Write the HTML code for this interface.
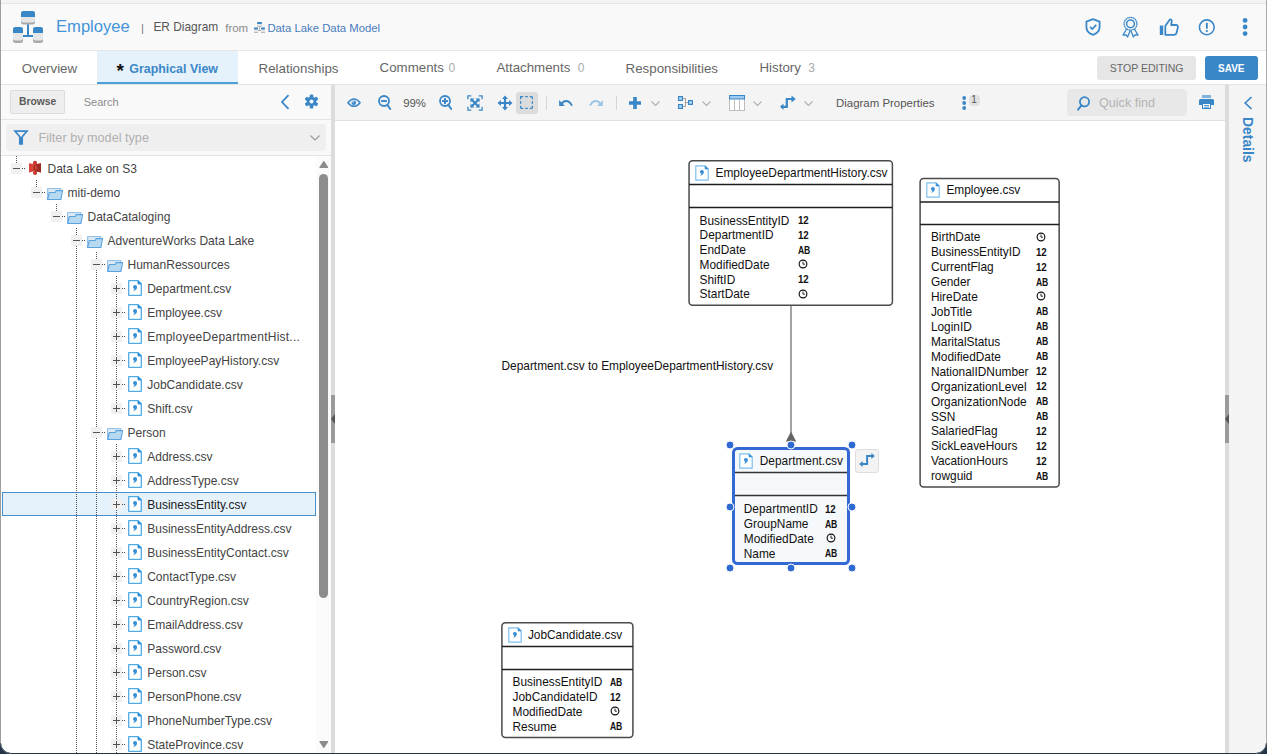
<!DOCTYPE html><html><head><meta charset="utf-8"><style>
html,body{margin:0;padding:0;}
body{width:1267px;height:754px;overflow:hidden;position:relative;background:#fff;font-family:"Liberation Sans",sans-serif;}
.t{position:absolute;white-space:nowrap;}
.b{position:absolute;box-sizing:border-box;}
.s{position:absolute;overflow:visible;}
</style></head><body>
<div class="b" style="left:0px;top:0px;width:1267px;height:3px;background:#f4f4f4"></div>
<div class="b" style="left:0px;top:3px;width:1267px;height:1px;background:#e6e6e6"></div>
<div class="b" style="left:0px;top:4px;width:1267px;height:46px;background:#f9f9f9"></div>
<div class="b" style="left:0px;top:50px;width:1267px;height:1px;background:#e6e6e6"></div>
<div class="b" style="left:0px;top:51px;width:1267px;height:33px;background:#fff"></div>
<div class="b" style="left:0px;top:84px;width:1267px;height:1px;background:#e4e4e4"></div>
<div class="b" style="left:97px;top:51px;width:141px;height:31px;background:#e6f2fb"></div>
<div class="b" style="left:97px;top:82px;width:141px;height:2px;background:#4ba0da"></div>
<svg class="s" style="left:12px;top:10px;" width="32" height="34" viewBox="0 0 32 34"><rect x="9" y="1" width="14" height="13.4" rx="2.5" fill="#a9a9a9"/><rect x="9" y="1" width="14" height="11.4" rx="2.5" fill="#e6e6e6"/><path d="M11.5 1h9a2.5 2.5 0 0 1 2.5 2.5V7H9V3.5A2.5 2.5 0 0 1 11.5 1z" fill="#3a87c8"/><rect x="1" y="17" width="10" height="16" rx="2.5" fill="#a9a9a9"/><rect x="1" y="17" width="10" height="13.5" rx="2.5" fill="#e6e6e6"/><path d="M3.5 17h5a2.5 2.5 0 0 1 2.5 2.5V23H1V19.5A2.5 2.5 0 0 1 3.5 17z" fill="#3a87c8"/><rect x="21" y="17" width="10" height="16" rx="2.5" fill="#a9a9a9"/><rect x="21" y="17" width="10" height="13.5" rx="2.5" fill="#e6e6e6"/><path d="M23.5 17h5a2.5 2.5 0 0 1 2.5 2.5V23H21V19.5A2.5 2.5 0 0 1 23.5 17z" fill="#3a87c8"/><rect x="15" y="14.4" width="2" height="11" fill="#3a87c8"/><rect x="11" y="25" width="10" height="2" fill="#3a87c8"/></svg>
<div class="t" style="left:56.00px;top:18.75px;font-size:16.6px;line-height:16.6px;color:#4494d8;font-weight:normal;">Employee</div>
<div class="t" style="left:141.00px;top:22.57px;font-size:11.5px;line-height:11.5px;color:#777;font-weight:normal;">|</div>
<div class="t" style="left:153.40px;top:22.03px;font-size:11.9px;line-height:11.9px;color:#555;font-weight:normal;">ER Diagram</div>
<div class="t" style="left:225.20px;top:23.17px;font-size:11.5px;line-height:11.5px;color:#8a8a8a;font-weight:normal;">from</div>
<svg class="s" style="left:254px;top:22px;" width="11" height="11" viewBox="0 0 11 11"><rect x="3" y="0" width="5" height="4.6" rx="0.8" fill="#e4e4e4"/><rect x="3" y="4" width="5" height="0.7" fill="#aaa"/><rect x="3" y="0" width="5" height="2" rx="0.8" fill="#3a87c8"/><rect x="0" y="5.4" width="4" height="5.4" rx="0.8" fill="#e4e4e4"/><rect x="0" y="10.1" width="4" height="0.8" fill="#aaa"/><rect x="0" y="5.4" width="4" height="2.2" rx="0.8" fill="#3a87c8"/><rect x="7" y="5.4" width="4" height="5.4" rx="0.8" fill="#e4e4e4"/><rect x="7" y="10.1" width="4" height="0.8" fill="#aaa"/><rect x="7" y="5.4" width="4" height="2.2" rx="0.8" fill="#3a87c8"/><rect x="5.1" y="4.7" width="0.8" height="3.5" fill="#aaa"/><rect x="4" y="8" width="3" height="0.8" fill="#999"/></svg>
<div class="t" style="left:267.40px;top:22.51px;font-size:11.33px;line-height:11.33px;color:#4a7cbc;font-weight:normal;">Data Lake Data Model</div>
<svg class="s" style="left:1085px;top:18px;" width="16" height="18" viewBox="0 0 16 18"><path d="M8 1.2 L14.6 3.6 V9 C14.6 13 11.8 15.6 8 16.8 C4.2 15.6 1.4 13 1.4 9 V3.6 Z" fill="none" stroke="#3a87c8" stroke-width="1.8" stroke-linejoin="round"/><path d="M5 8.8 L7.3 11 L11.2 6.8" fill="none" stroke="#3a87c8" stroke-width="1.7"/></svg>
<svg class="s" style="left:1122px;top:17px;" width="17" height="20" viewBox="0 0 17 20"><circle cx="8.5" cy="6.8" r="6.4" fill="none" stroke="#3a87c8" stroke-width="1.3" stroke-dasharray="1.6 0.4"/><circle cx="8.5" cy="6.8" r="3.9" fill="none" stroke="#3a87c8" stroke-width="1.5"/><path d="M4.6 12 L1 18.2 L4.2 17.8 L5.6 20 L8.2 13.6" fill="none" stroke="#3a87c8" stroke-width="1.3" stroke-linejoin="round"/><path d="M12.4 12 L16 18.2 L12.8 17.8 L11.4 20 L8.8 13.6" fill="none" stroke="#3a87c8" stroke-width="1.3" stroke-linejoin="round"/></svg>
<svg class="s" style="left:1159px;top:18px;" width="20" height="18" viewBox="0 0 20 18"><rect x="0.8" y="7.5" width="3.4" height="9.5" fill="#3a87c8"/><path d="M6.3 8 L10.5 2 C11.3 0.9 13 1.5 12.8 3 L12.2 7 H17 C18.4 7 19.2 8.1 18.9 9.4 L17.6 14.8 C17.3 16 16.4 16.8 15.2 16.8 H6.3 Z" fill="none" stroke="#3a87c8" stroke-width="1.8" stroke-linejoin="round"/></svg>
<svg class="s" style="left:1198px;top:19px;" width="18" height="17" viewBox="0 0 18 17"><circle cx="8.8" cy="8.3" r="7.4" fill="none" stroke="#3a87c8" stroke-width="1.6"/><rect x="7.9" y="3.8" width="1.9" height="6" rx="0.6" fill="#3a87c8"/><circle cx="8.85" cy="12.1" r="1.1" fill="#3a87c8"/></svg>
<svg class="s" style="left:1242px;top:18px;" width="7" height="18" viewBox="0 0 7 18"><circle cx="3.1" cy="2.4" r="2.4" fill="#3a87c8"/><circle cx="3.1" cy="9" r="2.4" fill="#3a87c8"/><circle cx="3.1" cy="15.6" r="2.4" fill="#3a87c8"/></svg>
<div class="t" style="left:21.70px;top:61.74px;font-size:13.3px;line-height:13.3px;color:#666;font-weight:normal;">Overview</div>
<div class="t" style="left:116.60px;top:60.52px;font-size:19px;line-height:19px;color:#111;font-weight:bold;">*</div>
<div class="t" style="left:129.30px;top:62.50px;font-size:12.4px;line-height:12.4px;color:#3a87c8;font-weight:bold;">Graphical View</div>
<div class="t" style="left:258.60px;top:61.94px;font-size:13.3px;line-height:13.3px;color:#666;font-weight:normal;">Relationships</div>
<div class="t" style="left:379.60px;top:60.94px;font-size:13.3px;line-height:13.3px;color:#666;font-weight:normal;">Comments</div>
<div class="t" style="left:448.40px;top:62.04px;font-size:12px;line-height:12px;color:#aaa;font-weight:normal;">0</div>
<div class="t" style="left:496.40px;top:60.94px;font-size:13.3px;line-height:13.3px;color:#666;font-weight:normal;">Attachments</div>
<div class="t" style="left:577.80px;top:62.04px;font-size:12px;line-height:12px;color:#aaa;font-weight:normal;">0</div>
<div class="t" style="left:625.60px;top:61.74px;font-size:13.3px;line-height:13.3px;color:#666;font-weight:normal;">Responsibilities</div>
<div class="t" style="left:759.50px;top:60.94px;font-size:13.3px;line-height:13.3px;color:#666;font-weight:normal;">History</div>
<div class="t" style="left:808.20px;top:62.04px;font-size:12px;line-height:12px;color:#aaa;font-weight:normal;">3</div>
<div class="b" style="left:1097px;top:56px;width:99px;height:24px;background:#e6e6e6;border-radius:3px"></div>
<div class="t" style="left:1109.80px;top:63.11px;font-size:10.5px;line-height:10.5px;color:#666;font-weight:normal;">STOP EDITING</div>
<div class="b" style="left:1205px;top:56px;width:53px;height:24px;background:#3a87c8;border-radius:3px"></div>
<div class="t" style="left:1218.00px;top:63.53px;font-size:10px;line-height:10px;color:#fff;font-weight:bold;">SAVE</div>
<div class="b" style="left:1px;top:85px;width:330px;height:34px;background:#f9f9f9"></div>
<div class="b" style="left:1px;top:119px;width:330px;height:1px;background:#e4e4e4"></div>
<div class="b" style="left:1px;top:120px;width:330px;height:35px;background:#f9f9f9"></div>
<div class="b" style="left:1px;top:155px;width:330px;height:1px;background:#e4e4e4"></div>
<div class="b" style="left:10px;top:90px;width:55px;height:24px;background:#eeeeee;border:1px solid #dcdcdc;border-radius:2px"></div>
<div class="t" style="left:19.00px;top:97.24px;font-size:10.35px;line-height:10.35px;color:#5a5a5a;font-weight:bold;">Browse</div>
<div class="t" style="left:83.70px;top:96.63px;font-size:11.07px;line-height:11.07px;color:#8c8c8c;font-weight:normal;">Search</div>
<svg class="s" style="left:280px;top:94px;" width="10" height="16" viewBox="0 0 10 16"><path d="M8.5 1.2 L2 8 L8.5 14.8" fill="none" stroke="#3a87c8" stroke-width="1.8"/></svg>
<svg class="s" style="left:304px;top:94px;" width="15" height="15" viewBox="0 0 15 15"><g transform="translate(7.5 7.5)" fill="#3a87c8"><rect x="-1.8" y="-6.9" width="3.6" height="3.6" rx="0.9" transform="rotate(0)"/><rect x="-1.8" y="-6.9" width="3.6" height="3.6" rx="0.9" transform="rotate(60)"/><rect x="-1.8" y="-6.9" width="3.6" height="3.6" rx="0.9" transform="rotate(120)"/><rect x="-1.8" y="-6.9" width="3.6" height="3.6" rx="0.9" transform="rotate(180)"/><rect x="-1.8" y="-6.9" width="3.6" height="3.6" rx="0.9" transform="rotate(240)"/><rect x="-1.8" y="-6.9" width="3.6" height="3.6" rx="0.9" transform="rotate(300)"/><circle r="4.7"/></g><circle cx="7.5" cy="7.5" r="2" fill="#f9f9f9"/></svg>
<div class="b" style="left:6px;top:124px;width:320px;height:27px;background:#efefef;border-radius:4px"></div>
<svg class="s" style="left:14px;top:130px;" width="14" height="15" viewBox="0 0 14 15"><path d="M1 1.1 H13 L8.2 6.8 V14 H5.8 V6.8 Z" fill="none" stroke="#3a87c8" stroke-width="1.7" stroke-linejoin="miter"/><rect x="5.8" y="7" width="2.4" height="7" fill="#3a87c8"/></svg>
<div class="t" style="left:38.50px;top:132.28px;font-size:12.66px;line-height:12.66px;color:#b0b0b0;font-weight:normal;">Filter by model type</div>
<svg class="s" style="left:310px;top:135px;" width="10" height="6" viewBox="0 0 10 6"><path d="M0.5 0.5 L5 5 L9.5 0.5" fill="none" stroke="#9a9a9a" stroke-width="1.2"/></svg>
<div class="b" style="left:2px;top:492px;width:314px;height:24px;background:#e6f2fb;border:1px solid #4a90d0"></div>
<div class="b" style="left:76px;top:246px;width:1px;height:507px;background:repeating-linear-gradient(#555 0 1px,transparent 1px 2px);background-position:0 0px"></div>
<div class="b" style="left:96px;top:270px;width:1px;height:483px;background:repeating-linear-gradient(#555 0 1px,transparent 1px 2px);background-position:0 0px"></div>
<div class="b" style="left:116px;top:294px;width:1px;height:114px;background:repeating-linear-gradient(#555 0 1px,transparent 1px 2px);background-position:0 0px"></div>
<div class="b" style="left:116px;top:444px;width:1px;height:309px;background:repeating-linear-gradient(#555 0 1px,transparent 1px 2px);background-position:0 0px"></div>
<div class="b" style="left:16px;top:155px;width:1px;height:8px;background:repeating-linear-gradient(#555 0 1px,transparent 1px 2px);background-position:0 -1px"></div>
<div class="b" style="left:11px;top:163px;width:11px;height:11px;background:#f0f0f0"></div>
<div class="b" style="left:13px;top:168px;width:7px;height:1px;background:#555"></div>
<div class="b" style="left:22px;top:168px;width:4px;height:1px;background:repeating-linear-gradient(90deg,#444 0 1px,transparent 1px 2px)"></div>
<svg class="s" style="left:29px;top:161px;" width="13" height="15" viewBox="0 0 13 15"><path d="M0 2.2 Q6 3.8 12 2.2 V11.4 Q6 9.8 0 11.4 Z" fill="#d8443a"/><path d="M6 3.2 Q9 3.2 12 2.2 V11.4 Q9 10.4 6 10.4 Z" fill="#9e2c24"/><circle cx="6" cy="1.9" r="2.1" fill="#c73a30"/><circle cx="6" cy="12" r="2.1" fill="#c73a30"/><ellipse cx="6.2" cy="6.8" rx="1.6" ry="2.4" fill="#8e2720"/><ellipse cx="6.9" cy="6.8" rx="1" ry="2" fill="#e0504a"/></svg>
<div class="t" style="left:47.50px;top:163.32px;font-size:12.03px;line-height:12.03px;color:#444;font-weight:normal;">Data Lake on S3</div>
<div class="b" style="left:36px;top:179px;width:1px;height:8px;background:repeating-linear-gradient(#555 0 1px,transparent 1px 2px);background-position:0 -1px"></div>
<div class="b" style="left:31px;top:187px;width:11px;height:11px;background:#f0f0f0"></div>
<div class="b" style="left:33px;top:192px;width:7px;height:1px;background:#555"></div>
<div class="b" style="left:42px;top:192px;width:4px;height:1px;background:repeating-linear-gradient(90deg,#444 0 1px,transparent 1px 2px)"></div>
<svg class="s" style="left:47px;top:188px;" width="17" height="13" viewBox="0 0 17 13"><rect x="0.6" y="0.6" width="13.2" height="10.9" fill="#dfeaf5" stroke="#93c0e6" stroke-width="1.1"/><path d="M0.6 11.5 L2.3 4.5 H8.2 L9.2 2.6 H15.6 L13.8 11.5 Z" fill="#b8d9f2" stroke="#5aa2dc" stroke-width="1.1" stroke-linejoin="round"/></svg>
<div class="t" style="left:67.50px;top:187.32px;font-size:12.03px;line-height:12.03px;color:#444;font-weight:normal;">miti-demo</div>
<div class="b" style="left:56px;top:203px;width:1px;height:8px;background:repeating-linear-gradient(#555 0 1px,transparent 1px 2px);background-position:0 -1px"></div>
<div class="b" style="left:51px;top:211px;width:11px;height:11px;background:#f0f0f0"></div>
<div class="b" style="left:53px;top:216px;width:7px;height:1px;background:#555"></div>
<div class="b" style="left:62px;top:216px;width:4px;height:1px;background:repeating-linear-gradient(90deg,#444 0 1px,transparent 1px 2px)"></div>
<svg class="s" style="left:67px;top:212px;" width="17" height="13" viewBox="0 0 17 13"><rect x="0.6" y="0.6" width="13.2" height="10.9" fill="#dfeaf5" stroke="#93c0e6" stroke-width="1.1"/><path d="M0.6 11.5 L2.3 4.5 H8.2 L9.2 2.6 H15.6 L13.8 11.5 Z" fill="#b8d9f2" stroke="#5aa2dc" stroke-width="1.1" stroke-linejoin="round"/></svg>
<div class="t" style="left:87.50px;top:211.32px;font-size:12.03px;line-height:12.03px;color:#444;font-weight:normal;">DataCataloging</div>
<div class="b" style="left:76px;top:227px;width:1px;height:8px;background:repeating-linear-gradient(#555 0 1px,transparent 1px 2px);background-position:0 -1px"></div>
<div class="b" style="left:71px;top:235px;width:11px;height:11px;background:#f0f0f0"></div>
<div class="b" style="left:73px;top:240px;width:7px;height:1px;background:#555"></div>
<div class="b" style="left:82px;top:240px;width:4px;height:1px;background:repeating-linear-gradient(90deg,#444 0 1px,transparent 1px 2px)"></div>
<svg class="s" style="left:87px;top:236px;" width="17" height="13" viewBox="0 0 17 13"><rect x="0.6" y="0.6" width="13.2" height="10.9" fill="#dfeaf5" stroke="#93c0e6" stroke-width="1.1"/><path d="M0.6 11.5 L2.3 4.5 H8.2 L9.2 2.6 H15.6 L13.8 11.5 Z" fill="#b8d9f2" stroke="#5aa2dc" stroke-width="1.1" stroke-linejoin="round"/></svg>
<div class="t" style="left:107.50px;top:235.32px;font-size:12.03px;line-height:12.03px;color:#444;font-weight:normal;">AdventureWorks Data Lake</div>
<div class="b" style="left:96px;top:251px;width:1px;height:8px;background:repeating-linear-gradient(#555 0 1px,transparent 1px 2px);background-position:0 -1px"></div>
<div class="b" style="left:91px;top:259px;width:11px;height:11px;background:#f0f0f0"></div>
<div class="b" style="left:93px;top:264px;width:7px;height:1px;background:#555"></div>
<div class="b" style="left:102px;top:264px;width:4px;height:1px;background:repeating-linear-gradient(90deg,#444 0 1px,transparent 1px 2px)"></div>
<svg class="s" style="left:107px;top:260px;" width="17" height="13" viewBox="0 0 17 13"><rect x="0.6" y="0.6" width="13.2" height="10.9" fill="#dfeaf5" stroke="#93c0e6" stroke-width="1.1"/><path d="M0.6 11.5 L2.3 4.5 H8.2 L9.2 2.6 H15.6 L13.8 11.5 Z" fill="#b8d9f2" stroke="#5aa2dc" stroke-width="1.1" stroke-linejoin="round"/></svg>
<div class="t" style="left:127.50px;top:259.32px;font-size:12.03px;line-height:12.03px;color:#444;font-weight:normal;">HumanRessources</div>
<div class="b" style="left:116px;top:275px;width:1px;height:8px;background:repeating-linear-gradient(#555 0 1px,transparent 1px 2px);background-position:0 -1px"></div>
<div class="b" style="left:111px;top:283px;width:11px;height:11px;background:#f0f0f0"></div>
<div class="b" style="left:113px;top:288px;width:7px;height:1px;background:#555"></div>
<div class="b" style="left:116px;top:285px;width:1px;height:7px;background:#555"></div>
<div class="b" style="left:122px;top:288px;width:4px;height:1px;background:repeating-linear-gradient(90deg,#444 0 1px,transparent 1px 2px)"></div>
<svg class="s" style="left:128px;top:280px;" width="14" height="16" viewBox="0 0 14 16"><path d="M0.7 0.7 H10 L13.3 4 V15.3 H0.7 Z" fill="#fff" stroke="#4faae6" stroke-width="1.3" stroke-linejoin="round"/><path d="M10 0.7 L13.3 4 H10 Z" fill="#2d8ad6" stroke="#2d8ad6" stroke-width="0.8" stroke-linejoin="round"/><path d="M5 7 A2.05 2.05 0 1 1 9.1 7.2 Q9 10 5.2 11 Q6.5 9.8 6.4 8.8 A2.05 2.05 0 0 1 5 7 Z" fill="#3a8fd6"/></svg>
<div class="t" style="left:147.20px;top:283.32px;font-size:12.03px;line-height:12.03px;color:#444;font-weight:normal;">Department.csv</div>
<div class="b" style="left:116px;top:299px;width:1px;height:8px;background:repeating-linear-gradient(#555 0 1px,transparent 1px 2px);background-position:0 -1px"></div>
<div class="b" style="left:111px;top:307px;width:11px;height:11px;background:#f0f0f0"></div>
<div class="b" style="left:113px;top:312px;width:7px;height:1px;background:#555"></div>
<div class="b" style="left:116px;top:309px;width:1px;height:7px;background:#555"></div>
<div class="b" style="left:122px;top:312px;width:4px;height:1px;background:repeating-linear-gradient(90deg,#444 0 1px,transparent 1px 2px)"></div>
<svg class="s" style="left:128px;top:304px;" width="14" height="16" viewBox="0 0 14 16"><path d="M0.7 0.7 H10 L13.3 4 V15.3 H0.7 Z" fill="#fff" stroke="#4faae6" stroke-width="1.3" stroke-linejoin="round"/><path d="M10 0.7 L13.3 4 H10 Z" fill="#2d8ad6" stroke="#2d8ad6" stroke-width="0.8" stroke-linejoin="round"/><path d="M5 7 A2.05 2.05 0 1 1 9.1 7.2 Q9 10 5.2 11 Q6.5 9.8 6.4 8.8 A2.05 2.05 0 0 1 5 7 Z" fill="#3a8fd6"/></svg>
<div class="t" style="left:147.20px;top:307.32px;font-size:12.03px;line-height:12.03px;color:#444;font-weight:normal;">Employee.csv</div>
<div class="b" style="left:116px;top:323px;width:1px;height:8px;background:repeating-linear-gradient(#555 0 1px,transparent 1px 2px);background-position:0 -1px"></div>
<div class="b" style="left:111px;top:331px;width:11px;height:11px;background:#f0f0f0"></div>
<div class="b" style="left:113px;top:336px;width:7px;height:1px;background:#555"></div>
<div class="b" style="left:116px;top:333px;width:1px;height:7px;background:#555"></div>
<div class="b" style="left:122px;top:336px;width:4px;height:1px;background:repeating-linear-gradient(90deg,#444 0 1px,transparent 1px 2px)"></div>
<svg class="s" style="left:128px;top:328px;" width="14" height="16" viewBox="0 0 14 16"><path d="M0.7 0.7 H10 L13.3 4 V15.3 H0.7 Z" fill="#fff" stroke="#4faae6" stroke-width="1.3" stroke-linejoin="round"/><path d="M10 0.7 L13.3 4 H10 Z" fill="#2d8ad6" stroke="#2d8ad6" stroke-width="0.8" stroke-linejoin="round"/><path d="M5 7 A2.05 2.05 0 1 1 9.1 7.2 Q9 10 5.2 11 Q6.5 9.8 6.4 8.8 A2.05 2.05 0 0 1 5 7 Z" fill="#3a8fd6"/></svg>
<div class="t" style="left:147.20px;top:331.32px;font-size:12.03px;line-height:12.03px;color:#444;font-weight:normal;letter-spacing:0.24px">EmployeeDepartmentHist...</div>
<div class="b" style="left:116px;top:347px;width:1px;height:8px;background:repeating-linear-gradient(#555 0 1px,transparent 1px 2px);background-position:0 -1px"></div>
<div class="b" style="left:111px;top:355px;width:11px;height:11px;background:#f0f0f0"></div>
<div class="b" style="left:113px;top:360px;width:7px;height:1px;background:#555"></div>
<div class="b" style="left:116px;top:357px;width:1px;height:7px;background:#555"></div>
<div class="b" style="left:122px;top:360px;width:4px;height:1px;background:repeating-linear-gradient(90deg,#444 0 1px,transparent 1px 2px)"></div>
<svg class="s" style="left:128px;top:352px;" width="14" height="16" viewBox="0 0 14 16"><path d="M0.7 0.7 H10 L13.3 4 V15.3 H0.7 Z" fill="#fff" stroke="#4faae6" stroke-width="1.3" stroke-linejoin="round"/><path d="M10 0.7 L13.3 4 H10 Z" fill="#2d8ad6" stroke="#2d8ad6" stroke-width="0.8" stroke-linejoin="round"/><path d="M5 7 A2.05 2.05 0 1 1 9.1 7.2 Q9 10 5.2 11 Q6.5 9.8 6.4 8.8 A2.05 2.05 0 0 1 5 7 Z" fill="#3a8fd6"/></svg>
<div class="t" style="left:147.20px;top:355.32px;font-size:12.03px;line-height:12.03px;color:#444;font-weight:normal;">EmployeePayHistory.csv</div>
<div class="b" style="left:116px;top:371px;width:1px;height:8px;background:repeating-linear-gradient(#555 0 1px,transparent 1px 2px);background-position:0 -1px"></div>
<div class="b" style="left:111px;top:379px;width:11px;height:11px;background:#f0f0f0"></div>
<div class="b" style="left:113px;top:384px;width:7px;height:1px;background:#555"></div>
<div class="b" style="left:116px;top:381px;width:1px;height:7px;background:#555"></div>
<div class="b" style="left:122px;top:384px;width:4px;height:1px;background:repeating-linear-gradient(90deg,#444 0 1px,transparent 1px 2px)"></div>
<svg class="s" style="left:128px;top:376px;" width="14" height="16" viewBox="0 0 14 16"><path d="M0.7 0.7 H10 L13.3 4 V15.3 H0.7 Z" fill="#fff" stroke="#4faae6" stroke-width="1.3" stroke-linejoin="round"/><path d="M10 0.7 L13.3 4 H10 Z" fill="#2d8ad6" stroke="#2d8ad6" stroke-width="0.8" stroke-linejoin="round"/><path d="M5 7 A2.05 2.05 0 1 1 9.1 7.2 Q9 10 5.2 11 Q6.5 9.8 6.4 8.8 A2.05 2.05 0 0 1 5 7 Z" fill="#3a8fd6"/></svg>
<div class="t" style="left:147.20px;top:379.32px;font-size:12.03px;line-height:12.03px;color:#444;font-weight:normal;">JobCandidate.csv</div>
<div class="b" style="left:116px;top:395px;width:1px;height:8px;background:repeating-linear-gradient(#555 0 1px,transparent 1px 2px);background-position:0 -1px"></div>
<div class="b" style="left:111px;top:403px;width:11px;height:11px;background:#f0f0f0"></div>
<div class="b" style="left:113px;top:408px;width:7px;height:1px;background:#555"></div>
<div class="b" style="left:116px;top:405px;width:1px;height:7px;background:#555"></div>
<div class="b" style="left:122px;top:408px;width:4px;height:1px;background:repeating-linear-gradient(90deg,#444 0 1px,transparent 1px 2px)"></div>
<svg class="s" style="left:128px;top:400px;" width="14" height="16" viewBox="0 0 14 16"><path d="M0.7 0.7 H10 L13.3 4 V15.3 H0.7 Z" fill="#fff" stroke="#4faae6" stroke-width="1.3" stroke-linejoin="round"/><path d="M10 0.7 L13.3 4 H10 Z" fill="#2d8ad6" stroke="#2d8ad6" stroke-width="0.8" stroke-linejoin="round"/><path d="M5 7 A2.05 2.05 0 1 1 9.1 7.2 Q9 10 5.2 11 Q6.5 9.8 6.4 8.8 A2.05 2.05 0 0 1 5 7 Z" fill="#3a8fd6"/></svg>
<div class="t" style="left:147.20px;top:403.32px;font-size:12.03px;line-height:12.03px;color:#444;font-weight:normal;">Shift.csv</div>
<div class="b" style="left:96px;top:419px;width:1px;height:8px;background:repeating-linear-gradient(#555 0 1px,transparent 1px 2px);background-position:0 -1px"></div>
<div class="b" style="left:91px;top:427px;width:11px;height:11px;background:#f0f0f0"></div>
<div class="b" style="left:93px;top:432px;width:7px;height:1px;background:#555"></div>
<div class="b" style="left:102px;top:432px;width:4px;height:1px;background:repeating-linear-gradient(90deg,#444 0 1px,transparent 1px 2px)"></div>
<svg class="s" style="left:107px;top:428px;" width="17" height="13" viewBox="0 0 17 13"><rect x="0.6" y="0.6" width="13.2" height="10.9" fill="#dfeaf5" stroke="#93c0e6" stroke-width="1.1"/><path d="M0.6 11.5 L2.3 4.5 H8.2 L9.2 2.6 H15.6 L13.8 11.5 Z" fill="#b8d9f2" stroke="#5aa2dc" stroke-width="1.1" stroke-linejoin="round"/></svg>
<div class="t" style="left:127.50px;top:427.32px;font-size:12.03px;line-height:12.03px;color:#444;font-weight:normal;">Person</div>
<div class="b" style="left:116px;top:443px;width:1px;height:8px;background:repeating-linear-gradient(#555 0 1px,transparent 1px 2px);background-position:0 -1px"></div>
<div class="b" style="left:111px;top:451px;width:11px;height:11px;background:#f0f0f0"></div>
<div class="b" style="left:113px;top:456px;width:7px;height:1px;background:#555"></div>
<div class="b" style="left:116px;top:453px;width:1px;height:7px;background:#555"></div>
<div class="b" style="left:122px;top:456px;width:4px;height:1px;background:repeating-linear-gradient(90deg,#444 0 1px,transparent 1px 2px)"></div>
<svg class="s" style="left:128px;top:448px;" width="14" height="16" viewBox="0 0 14 16"><path d="M0.7 0.7 H10 L13.3 4 V15.3 H0.7 Z" fill="#fff" stroke="#4faae6" stroke-width="1.3" stroke-linejoin="round"/><path d="M10 0.7 L13.3 4 H10 Z" fill="#2d8ad6" stroke="#2d8ad6" stroke-width="0.8" stroke-linejoin="round"/><path d="M5 7 A2.05 2.05 0 1 1 9.1 7.2 Q9 10 5.2 11 Q6.5 9.8 6.4 8.8 A2.05 2.05 0 0 1 5 7 Z" fill="#3a8fd6"/></svg>
<div class="t" style="left:147.20px;top:451.32px;font-size:12.03px;line-height:12.03px;color:#444;font-weight:normal;">Address.csv</div>
<div class="b" style="left:116px;top:467px;width:1px;height:8px;background:repeating-linear-gradient(#555 0 1px,transparent 1px 2px);background-position:0 -1px"></div>
<div class="b" style="left:111px;top:475px;width:11px;height:11px;background:#f0f0f0"></div>
<div class="b" style="left:113px;top:480px;width:7px;height:1px;background:#555"></div>
<div class="b" style="left:116px;top:477px;width:1px;height:7px;background:#555"></div>
<div class="b" style="left:122px;top:480px;width:4px;height:1px;background:repeating-linear-gradient(90deg,#444 0 1px,transparent 1px 2px)"></div>
<svg class="s" style="left:128px;top:472px;" width="14" height="16" viewBox="0 0 14 16"><path d="M0.7 0.7 H10 L13.3 4 V15.3 H0.7 Z" fill="#fff" stroke="#4faae6" stroke-width="1.3" stroke-linejoin="round"/><path d="M10 0.7 L13.3 4 H10 Z" fill="#2d8ad6" stroke="#2d8ad6" stroke-width="0.8" stroke-linejoin="round"/><path d="M5 7 A2.05 2.05 0 1 1 9.1 7.2 Q9 10 5.2 11 Q6.5 9.8 6.4 8.8 A2.05 2.05 0 0 1 5 7 Z" fill="#3a8fd6"/></svg>
<div class="t" style="left:147.20px;top:475.32px;font-size:12.03px;line-height:12.03px;color:#444;font-weight:normal;">AddressType.csv</div>
<div class="b" style="left:116px;top:491px;width:1px;height:8px;background:repeating-linear-gradient(#555 0 1px,transparent 1px 2px);background-position:0 -1px"></div>
<div class="b" style="left:111px;top:499px;width:11px;height:11px;background:#f0f0f0"></div>
<div class="b" style="left:113px;top:504px;width:7px;height:1px;background:#555"></div>
<div class="b" style="left:116px;top:501px;width:1px;height:7px;background:#555"></div>
<div class="b" style="left:122px;top:504px;width:4px;height:1px;background:repeating-linear-gradient(90deg,#444 0 1px,transparent 1px 2px)"></div>
<svg class="s" style="left:128px;top:496px;" width="14" height="16" viewBox="0 0 14 16"><path d="M0.7 0.7 H10 L13.3 4 V15.3 H0.7 Z" fill="#fff" stroke="#4faae6" stroke-width="1.3" stroke-linejoin="round"/><path d="M10 0.7 L13.3 4 H10 Z" fill="#2d8ad6" stroke="#2d8ad6" stroke-width="0.8" stroke-linejoin="round"/><path d="M5 7 A2.05 2.05 0 1 1 9.1 7.2 Q9 10 5.2 11 Q6.5 9.8 6.4 8.8 A2.05 2.05 0 0 1 5 7 Z" fill="#3a8fd6"/></svg>
<div class="t" style="left:147.20px;top:499.32px;font-size:12.03px;line-height:12.03px;color:#222;font-weight:normal;">BusinessEntity.csv</div>
<div class="b" style="left:116px;top:515px;width:1px;height:8px;background:repeating-linear-gradient(#555 0 1px,transparent 1px 2px);background-position:0 -1px"></div>
<div class="b" style="left:111px;top:523px;width:11px;height:11px;background:#f0f0f0"></div>
<div class="b" style="left:113px;top:528px;width:7px;height:1px;background:#555"></div>
<div class="b" style="left:116px;top:525px;width:1px;height:7px;background:#555"></div>
<div class="b" style="left:122px;top:528px;width:4px;height:1px;background:repeating-linear-gradient(90deg,#444 0 1px,transparent 1px 2px)"></div>
<svg class="s" style="left:128px;top:520px;" width="14" height="16" viewBox="0 0 14 16"><path d="M0.7 0.7 H10 L13.3 4 V15.3 H0.7 Z" fill="#fff" stroke="#4faae6" stroke-width="1.3" stroke-linejoin="round"/><path d="M10 0.7 L13.3 4 H10 Z" fill="#2d8ad6" stroke="#2d8ad6" stroke-width="0.8" stroke-linejoin="round"/><path d="M5 7 A2.05 2.05 0 1 1 9.1 7.2 Q9 10 5.2 11 Q6.5 9.8 6.4 8.8 A2.05 2.05 0 0 1 5 7 Z" fill="#3a8fd6"/></svg>
<div class="t" style="left:147.20px;top:523.32px;font-size:12.03px;line-height:12.03px;color:#444;font-weight:normal;">BusinessEntityAddress.csv</div>
<div class="b" style="left:116px;top:539px;width:1px;height:8px;background:repeating-linear-gradient(#555 0 1px,transparent 1px 2px);background-position:0 -1px"></div>
<div class="b" style="left:111px;top:547px;width:11px;height:11px;background:#f0f0f0"></div>
<div class="b" style="left:113px;top:552px;width:7px;height:1px;background:#555"></div>
<div class="b" style="left:116px;top:549px;width:1px;height:7px;background:#555"></div>
<div class="b" style="left:122px;top:552px;width:4px;height:1px;background:repeating-linear-gradient(90deg,#444 0 1px,transparent 1px 2px)"></div>
<svg class="s" style="left:128px;top:544px;" width="14" height="16" viewBox="0 0 14 16"><path d="M0.7 0.7 H10 L13.3 4 V15.3 H0.7 Z" fill="#fff" stroke="#4faae6" stroke-width="1.3" stroke-linejoin="round"/><path d="M10 0.7 L13.3 4 H10 Z" fill="#2d8ad6" stroke="#2d8ad6" stroke-width="0.8" stroke-linejoin="round"/><path d="M5 7 A2.05 2.05 0 1 1 9.1 7.2 Q9 10 5.2 11 Q6.5 9.8 6.4 8.8 A2.05 2.05 0 0 1 5 7 Z" fill="#3a8fd6"/></svg>
<div class="t" style="left:147.20px;top:547.32px;font-size:12.03px;line-height:12.03px;color:#444;font-weight:normal;">BusinessEntityContact.csv</div>
<div class="b" style="left:116px;top:563px;width:1px;height:8px;background:repeating-linear-gradient(#555 0 1px,transparent 1px 2px);background-position:0 -1px"></div>
<div class="b" style="left:111px;top:571px;width:11px;height:11px;background:#f0f0f0"></div>
<div class="b" style="left:113px;top:576px;width:7px;height:1px;background:#555"></div>
<div class="b" style="left:116px;top:573px;width:1px;height:7px;background:#555"></div>
<div class="b" style="left:122px;top:576px;width:4px;height:1px;background:repeating-linear-gradient(90deg,#444 0 1px,transparent 1px 2px)"></div>
<svg class="s" style="left:128px;top:568px;" width="14" height="16" viewBox="0 0 14 16"><path d="M0.7 0.7 H10 L13.3 4 V15.3 H0.7 Z" fill="#fff" stroke="#4faae6" stroke-width="1.3" stroke-linejoin="round"/><path d="M10 0.7 L13.3 4 H10 Z" fill="#2d8ad6" stroke="#2d8ad6" stroke-width="0.8" stroke-linejoin="round"/><path d="M5 7 A2.05 2.05 0 1 1 9.1 7.2 Q9 10 5.2 11 Q6.5 9.8 6.4 8.8 A2.05 2.05 0 0 1 5 7 Z" fill="#3a8fd6"/></svg>
<div class="t" style="left:147.20px;top:571.32px;font-size:12.03px;line-height:12.03px;color:#444;font-weight:normal;">ContactType.csv</div>
<div class="b" style="left:116px;top:587px;width:1px;height:8px;background:repeating-linear-gradient(#555 0 1px,transparent 1px 2px);background-position:0 -1px"></div>
<div class="b" style="left:111px;top:595px;width:11px;height:11px;background:#f0f0f0"></div>
<div class="b" style="left:113px;top:600px;width:7px;height:1px;background:#555"></div>
<div class="b" style="left:116px;top:597px;width:1px;height:7px;background:#555"></div>
<div class="b" style="left:122px;top:600px;width:4px;height:1px;background:repeating-linear-gradient(90deg,#444 0 1px,transparent 1px 2px)"></div>
<svg class="s" style="left:128px;top:592px;" width="14" height="16" viewBox="0 0 14 16"><path d="M0.7 0.7 H10 L13.3 4 V15.3 H0.7 Z" fill="#fff" stroke="#4faae6" stroke-width="1.3" stroke-linejoin="round"/><path d="M10 0.7 L13.3 4 H10 Z" fill="#2d8ad6" stroke="#2d8ad6" stroke-width="0.8" stroke-linejoin="round"/><path d="M5 7 A2.05 2.05 0 1 1 9.1 7.2 Q9 10 5.2 11 Q6.5 9.8 6.4 8.8 A2.05 2.05 0 0 1 5 7 Z" fill="#3a8fd6"/></svg>
<div class="t" style="left:147.20px;top:595.32px;font-size:12.03px;line-height:12.03px;color:#444;font-weight:normal;">CountryRegion.csv</div>
<div class="b" style="left:116px;top:611px;width:1px;height:8px;background:repeating-linear-gradient(#555 0 1px,transparent 1px 2px);background-position:0 -1px"></div>
<div class="b" style="left:111px;top:619px;width:11px;height:11px;background:#f0f0f0"></div>
<div class="b" style="left:113px;top:624px;width:7px;height:1px;background:#555"></div>
<div class="b" style="left:116px;top:621px;width:1px;height:7px;background:#555"></div>
<div class="b" style="left:122px;top:624px;width:4px;height:1px;background:repeating-linear-gradient(90deg,#444 0 1px,transparent 1px 2px)"></div>
<svg class="s" style="left:128px;top:616px;" width="14" height="16" viewBox="0 0 14 16"><path d="M0.7 0.7 H10 L13.3 4 V15.3 H0.7 Z" fill="#fff" stroke="#4faae6" stroke-width="1.3" stroke-linejoin="round"/><path d="M10 0.7 L13.3 4 H10 Z" fill="#2d8ad6" stroke="#2d8ad6" stroke-width="0.8" stroke-linejoin="round"/><path d="M5 7 A2.05 2.05 0 1 1 9.1 7.2 Q9 10 5.2 11 Q6.5 9.8 6.4 8.8 A2.05 2.05 0 0 1 5 7 Z" fill="#3a8fd6"/></svg>
<div class="t" style="left:147.20px;top:619.32px;font-size:12.03px;line-height:12.03px;color:#444;font-weight:normal;">EmailAddress.csv</div>
<div class="b" style="left:116px;top:635px;width:1px;height:8px;background:repeating-linear-gradient(#555 0 1px,transparent 1px 2px);background-position:0 -1px"></div>
<div class="b" style="left:111px;top:643px;width:11px;height:11px;background:#f0f0f0"></div>
<div class="b" style="left:113px;top:648px;width:7px;height:1px;background:#555"></div>
<div class="b" style="left:116px;top:645px;width:1px;height:7px;background:#555"></div>
<div class="b" style="left:122px;top:648px;width:4px;height:1px;background:repeating-linear-gradient(90deg,#444 0 1px,transparent 1px 2px)"></div>
<svg class="s" style="left:128px;top:640px;" width="14" height="16" viewBox="0 0 14 16"><path d="M0.7 0.7 H10 L13.3 4 V15.3 H0.7 Z" fill="#fff" stroke="#4faae6" stroke-width="1.3" stroke-linejoin="round"/><path d="M10 0.7 L13.3 4 H10 Z" fill="#2d8ad6" stroke="#2d8ad6" stroke-width="0.8" stroke-linejoin="round"/><path d="M5 7 A2.05 2.05 0 1 1 9.1 7.2 Q9 10 5.2 11 Q6.5 9.8 6.4 8.8 A2.05 2.05 0 0 1 5 7 Z" fill="#3a8fd6"/></svg>
<div class="t" style="left:147.20px;top:643.32px;font-size:12.03px;line-height:12.03px;color:#444;font-weight:normal;">Password.csv</div>
<div class="b" style="left:116px;top:659px;width:1px;height:8px;background:repeating-linear-gradient(#555 0 1px,transparent 1px 2px);background-position:0 -1px"></div>
<div class="b" style="left:111px;top:667px;width:11px;height:11px;background:#f0f0f0"></div>
<div class="b" style="left:113px;top:672px;width:7px;height:1px;background:#555"></div>
<div class="b" style="left:116px;top:669px;width:1px;height:7px;background:#555"></div>
<div class="b" style="left:122px;top:672px;width:4px;height:1px;background:repeating-linear-gradient(90deg,#444 0 1px,transparent 1px 2px)"></div>
<svg class="s" style="left:128px;top:664px;" width="14" height="16" viewBox="0 0 14 16"><path d="M0.7 0.7 H10 L13.3 4 V15.3 H0.7 Z" fill="#fff" stroke="#4faae6" stroke-width="1.3" stroke-linejoin="round"/><path d="M10 0.7 L13.3 4 H10 Z" fill="#2d8ad6" stroke="#2d8ad6" stroke-width="0.8" stroke-linejoin="round"/><path d="M5 7 A2.05 2.05 0 1 1 9.1 7.2 Q9 10 5.2 11 Q6.5 9.8 6.4 8.8 A2.05 2.05 0 0 1 5 7 Z" fill="#3a8fd6"/></svg>
<div class="t" style="left:147.20px;top:667.32px;font-size:12.03px;line-height:12.03px;color:#444;font-weight:normal;">Person.csv</div>
<div class="b" style="left:116px;top:683px;width:1px;height:8px;background:repeating-linear-gradient(#555 0 1px,transparent 1px 2px);background-position:0 -1px"></div>
<div class="b" style="left:111px;top:691px;width:11px;height:11px;background:#f0f0f0"></div>
<div class="b" style="left:113px;top:696px;width:7px;height:1px;background:#555"></div>
<div class="b" style="left:116px;top:693px;width:1px;height:7px;background:#555"></div>
<div class="b" style="left:122px;top:696px;width:4px;height:1px;background:repeating-linear-gradient(90deg,#444 0 1px,transparent 1px 2px)"></div>
<svg class="s" style="left:128px;top:688px;" width="14" height="16" viewBox="0 0 14 16"><path d="M0.7 0.7 H10 L13.3 4 V15.3 H0.7 Z" fill="#fff" stroke="#4faae6" stroke-width="1.3" stroke-linejoin="round"/><path d="M10 0.7 L13.3 4 H10 Z" fill="#2d8ad6" stroke="#2d8ad6" stroke-width="0.8" stroke-linejoin="round"/><path d="M5 7 A2.05 2.05 0 1 1 9.1 7.2 Q9 10 5.2 11 Q6.5 9.8 6.4 8.8 A2.05 2.05 0 0 1 5 7 Z" fill="#3a8fd6"/></svg>
<div class="t" style="left:147.20px;top:691.32px;font-size:12.03px;line-height:12.03px;color:#444;font-weight:normal;">PersonPhone.csv</div>
<div class="b" style="left:116px;top:707px;width:1px;height:8px;background:repeating-linear-gradient(#555 0 1px,transparent 1px 2px);background-position:0 -1px"></div>
<div class="b" style="left:111px;top:715px;width:11px;height:11px;background:#f0f0f0"></div>
<div class="b" style="left:113px;top:720px;width:7px;height:1px;background:#555"></div>
<div class="b" style="left:116px;top:717px;width:1px;height:7px;background:#555"></div>
<div class="b" style="left:122px;top:720px;width:4px;height:1px;background:repeating-linear-gradient(90deg,#444 0 1px,transparent 1px 2px)"></div>
<svg class="s" style="left:128px;top:712px;" width="14" height="16" viewBox="0 0 14 16"><path d="M0.7 0.7 H10 L13.3 4 V15.3 H0.7 Z" fill="#fff" stroke="#4faae6" stroke-width="1.3" stroke-linejoin="round"/><path d="M10 0.7 L13.3 4 H10 Z" fill="#2d8ad6" stroke="#2d8ad6" stroke-width="0.8" stroke-linejoin="round"/><path d="M5 7 A2.05 2.05 0 1 1 9.1 7.2 Q9 10 5.2 11 Q6.5 9.8 6.4 8.8 A2.05 2.05 0 0 1 5 7 Z" fill="#3a8fd6"/></svg>
<div class="t" style="left:147.20px;top:715.32px;font-size:12.03px;line-height:12.03px;color:#444;font-weight:normal;">PhoneNumberType.csv</div>
<div class="b" style="left:116px;top:731px;width:1px;height:8px;background:repeating-linear-gradient(#555 0 1px,transparent 1px 2px);background-position:0 -1px"></div>
<div class="b" style="left:111px;top:739px;width:11px;height:11px;background:#f0f0f0"></div>
<div class="b" style="left:113px;top:744px;width:7px;height:1px;background:#555"></div>
<div class="b" style="left:116px;top:741px;width:1px;height:7px;background:#555"></div>
<div class="b" style="left:122px;top:744px;width:4px;height:1px;background:repeating-linear-gradient(90deg,#444 0 1px,transparent 1px 2px)"></div>
<svg class="s" style="left:128px;top:736px;" width="14" height="16" viewBox="0 0 14 16"><path d="M0.7 0.7 H10 L13.3 4 V15.3 H0.7 Z" fill="#fff" stroke="#4faae6" stroke-width="1.3" stroke-linejoin="round"/><path d="M10 0.7 L13.3 4 H10 Z" fill="#2d8ad6" stroke="#2d8ad6" stroke-width="0.8" stroke-linejoin="round"/><path d="M5 7 A2.05 2.05 0 1 1 9.1 7.2 Q9 10 5.2 11 Q6.5 9.8 6.4 8.8 A2.05 2.05 0 0 1 5 7 Z" fill="#3a8fd6"/></svg>
<div class="t" style="left:147.20px;top:739.32px;font-size:12.03px;line-height:12.03px;color:#444;font-weight:normal;">StateProvince.csv</div>
<div class="b" style="left:316px;top:156px;width:15px;height:597px;background:#fbfbfb"></div>
<svg class="s" style="left:319px;top:160px;" width="10" height="9" viewBox="0 0 10 9"><path d="M1 7.4 L4.8 1.6 L8.6 7.4 Z" fill="#8c8c8c" stroke="#8c8c8c" stroke-width="1.2" stroke-linejoin="round"/></svg>
<div class="b" style="left:319px;top:174px;width:9px;height:424px;background:#8c8c8c;border-radius:4.5px"></div>
<svg class="s" style="left:319px;top:740px;" width="10" height="9" viewBox="0 0 10 9"><path d="M1 1.6 L4.8 7.4 L8.6 1.6 Z" fill="#8c8c8c" stroke="#8c8c8c" stroke-width="1.2" stroke-linejoin="round"/></svg>
<div class="b" style="left:331px;top:85px;width:4px;height:668px;background:#dcdcdc"></div>
<div class="b" style="left:331px;top:395px;width:4px;height:48px;background:#9a9a9a"></div>
<svg class="s" style="left:331px;top:414px;" width="4" height="10" viewBox="0 0 4 10"><path d="M4 0 L0 5 L4 10 Z" fill="#555"/></svg>
<div class="b" style="left:335px;top:85px;width:890px;height:35px;background:#f4f4f4"></div>
<div class="b" style="left:335px;top:120px;width:890px;height:1px;background:#e2e2e2"></div>
<svg class="s" style="left:347px;top:98px;" width="14" height="10" viewBox="0 0 14 10"><path d="M0.9 4.7 Q7 -2.6 13.1 4.7 Q7 12 0.9 4.7 Z" fill="none" stroke="#3a87c8" stroke-width="1.5" stroke-linejoin="round"/><circle cx="6.8" cy="4.7" r="2.3" fill="#3a87c8"/><circle cx="6.1" cy="3.9" r="0.8" fill="#f4f4f4"/></svg>
<svg class="s" style="left:378px;top:95px;" width="14" height="15" viewBox="0 0 14 15"><circle cx="6" cy="6" r="5" fill="none" stroke="#3a87c8" stroke-width="1.8"/><path d="M9.3 9.8 L12.2 14" stroke="#3a87c8" stroke-width="2" stroke-linecap="round"/><rect x="3" y="5.1" width="6" height="1.9" fill="#3a87c8"/></svg>
<div class="t" style="left:403.20px;top:97.85px;font-size:11.4px;line-height:11.4px;color:#555;font-weight:normal;">99%</div>
<svg class="s" style="left:439px;top:95px;" width="14" height="15" viewBox="0 0 14 15"><circle cx="6" cy="6" r="5" fill="none" stroke="#3a87c8" stroke-width="1.8"/><path d="M9.3 9.8 L12.2 14" stroke="#3a87c8" stroke-width="2" stroke-linecap="round"/><rect x="3" y="5.1" width="6" height="1.9" fill="#3a87c8"/><rect x="5.05" y="3" width="1.9" height="6" fill="#3a87c8"/></svg>
<svg class="s" style="left:467px;top:95px;" width="16" height="16" viewBox="0 0 16 16"><path d="M0.9 4.3 V0.9 H4.3 M11.7 0.9 H15.1 V4.3 M15.1 11.7 V15.1 H11.7 M4.3 15.1 H0.9 V11.7" fill="none" stroke="#3a87c8" stroke-width="1.3"/><path d="M4 4 L12 12 M12 4 L4 12" stroke="#3a87c8" stroke-width="2.2"/><path d="M3.5 3.5 h4 l-4 4z M12.5 3.5 v4 l-4 -4z M12.5 12.5 h-4 l4 -4z M3.5 12.5 v-4 l4 4z" fill="#3a87c8"/></svg>
<svg class="s" style="left:497px;top:95px;" width="16" height="16" viewBox="0 0 16 16"><path d="M8 0.5 L11 4 H9.1 V6.9 H12 V5 L15.5 8 L12 11 V9.1 H9.1 V12 H11 L8 15.5 L5 12 H6.9 V9.1 H4 V11 L0.5 8 L4 5 V6.9 H6.9 V4 H5 Z" fill="#3a87c8"/></svg>
<div class="b" style="left:516px;top:92px;width:22px;height:22px;background:#dcdcdc;border-radius:3px"></div>
<svg class="s" style="left:520px;top:96px;" width="13" height="13" viewBox="0 0 13 13"><rect x="0.65" y="0.65" width="11.7" height="11.7" fill="none" stroke="#3a87c8" stroke-width="1.3" stroke-dasharray="2.6 1.95 2.6 1.95 2.6 0"/></svg>
<div class="b" style="left:546px;top:96px;width:1px;height:14px;background:#d6d6d6"></div>
<svg class="s" style="left:558px;top:98px;" width="15" height="9" viewBox="0 0 15 9"><path d="M3.4 6 C5.5 2.3 10.5 1 14 7.6" fill="none" stroke="#3a87c8" stroke-width="2"/><path d="M1.1 2 V7.9 H6.8 Z" fill="#3a87c8"/></svg>
<svg class="s" style="left:589px;top:98px;" width="15" height="9" viewBox="0 0 15 9"><path d="M11.6 6 C9.5 2.3 4.5 1 1 7.6" fill="none" stroke="#9cc6e8" stroke-width="2"/><path d="M13.9 2 V7.9 H8.2 Z" fill="#9cc6e8"/></svg>
<div class="b" style="left:616px;top:96px;width:1px;height:14px;background:#d6d6d6"></div>
<svg class="s" style="left:629px;top:97px;" width="12" height="12" viewBox="0 0 12 12"><path d="M4.2 0 H7.8 V4.2 H12 V7.8 H7.8 V12 H4.2 V7.8 H0 V4.2 H4.2 Z" fill="#3a87c8"/></svg>
<svg class="s" style="left:651px;top:101px;" width="9" height="5" viewBox="0 0 9 5"><path d="M0.5 0.5 L4.5 4.5 L8.5 0.5" fill="none" stroke="#b0b0b0" stroke-width="1.1"/></svg>
<svg class="s" style="left:678px;top:96px;" width="16" height="13" viewBox="0 0 16 13"><path d="M4.4 2.5 H7.5 V10.5 H4.4 M7.5 6.5 H10.6" fill="none" stroke="#a0a0a0" stroke-width="1"/><rect x="0.6" y="0.6" width="3.8" height="3.8" fill="#b5d8f3" stroke="#3a87c8" stroke-width="1.2"/><rect x="0.6" y="8.6" width="3.8" height="3.8" fill="#b5d8f3" stroke="#3a87c8" stroke-width="1.2"/><rect x="10.6" y="4.6" width="3.8" height="3.8" fill="#b5d8f3" stroke="#3a87c8" stroke-width="1.2"/></svg>
<svg class="s" style="left:702px;top:101px;" width="9" height="5" viewBox="0 0 9 5"><path d="M0.5 0.5 L4.5 4.5 L8.5 0.5" fill="none" stroke="#b0b0b0" stroke-width="1.1"/></svg>
<svg class="s" style="left:729px;top:95px;" width="16" height="16" viewBox="0 0 16 16"><rect x="0.5" y="0.5" width="15" height="15" fill="#fff" stroke="#bdbdbd" stroke-width="1"/><rect x="0.5" y="0.5" width="15" height="3.5" fill="#9fcaf0" stroke="#3a87c8" stroke-width="1"/><path d="M5.5 4 V15.5 M10.5 4 V15.5" stroke="#bdbdbd" stroke-width="1"/></svg>
<svg class="s" style="left:753px;top:101px;" width="9" height="5" viewBox="0 0 9 5"><path d="M0.5 0.5 L4.5 4.5 L8.5 0.5" fill="none" stroke="#b0b0b0" stroke-width="1.1"/></svg>
<svg class="s" style="left:780px;top:95px;" width="16" height="14" viewBox="0 0 16 14"><path d="M1.5 11.8 H6.8 V4 H13" fill="none" stroke="#3a87c8" stroke-width="2.2"/><path d="M11.5 0.5 L15.8 4 L11.5 7.5 Z" fill="#3a87c8"/><path d="M3.5 8.5 L0 11.8 L3.5 15 Z" fill="#3a87c8"/></svg>
<svg class="s" style="left:804px;top:101px;" width="9" height="5" viewBox="0 0 9 5"><path d="M0.5 0.5 L4.5 4.5 L8.5 0.5" fill="none" stroke="#b0b0b0" stroke-width="1.1"/></svg>
<div class="t" style="left:836.00px;top:98.31px;font-size:11.45px;line-height:11.45px;color:#555;font-weight:normal;">Diagram Properties</div>
<svg class="s" style="left:962px;top:96px;" width="5" height="14" viewBox="0 0 5 14"><circle cx="2.2" cy="2" r="1.9" fill="#3a87c8"/><circle cx="2.2" cy="7" r="1.9" fill="#3a87c8"/><circle cx="2.2" cy="12" r="1.9" fill="#3a87c8"/></svg>
<div class="b" style="left:969px;top:95px;width:11px;height:11px;background:#e0e0e0;border-radius:4px"></div>
<div class="t" style="left:971.30px;top:95.33px;font-size:10px;line-height:10px;color:#555;font-weight:normal;">1</div>
<div class="b" style="left:1067px;top:89px;width:120px;height:27px;background:#e8e8e8;border-radius:4px"></div>
<svg class="s" style="left:1077px;top:96px;" width="13" height="15" viewBox="0 0 13 15"><circle cx="7.5" cy="5.8" r="4.6" fill="none" stroke="#3a87c8" stroke-width="1.8"/><path d="M4.6 9.4 L1 13.6" stroke="#3a87c8" stroke-width="2" stroke-linecap="round"/></svg>
<div class="t" style="left:1099.00px;top:96.63px;font-size:12.6px;line-height:12.6px;color:#b3b3b3;font-weight:normal;">Quick find</div>
<svg class="s" style="left:1199px;top:95px;" width="15" height="14" viewBox="0 0 15 14"><rect x="3" y="0" width="9" height="3" fill="#7fb3e0"/><path d="M1.5 4 H13.5 Q15 4 15 5.5 V10 H12 V8 H3 V10 H0 V5.5 Q0 4 1.5 4 Z" fill="#3a87c8"/><rect x="3.5" y="8.5" width="8" height="5" fill="#fff" stroke="#3a87c8" stroke-width="1"/><path d="M5 10.5 H10 M5 12.2 H10" stroke="#3a87c8" stroke-width="0.9"/></svg>
<div class="b" style="left:1225px;top:85px;width:4px;height:668px;background:#dcdcdc"></div>
<div class="b" style="left:1225px;top:395px;width:4px;height:48px;background:#9a9a9a"></div>
<svg class="s" style="left:1225px;top:414px;" width="4" height="10" viewBox="0 0 4 10"><path d="M4 0 L0 5 L4 10 Z" fill="#555"/></svg>
<div class="b" style="left:1229px;top:85px;width:37px;height:668px;background:#f4f4f4"></div>
<svg class="s" style="left:1243px;top:96px;" width="10" height="14" viewBox="0 0 10 14"><path d="M8.5 1 L2.2 7 L8.5 13" fill="none" stroke="#3a87c8" stroke-width="1.7"/></svg>
<div class="t" style="left:1241px;top:117px;width:14px;height:46px;"><div style="position:absolute;left:0;top:0;transform-origin:0 0;transform:translate(14px,0) rotate(90deg);font-size:13.9px;line-height:14px;font-weight:bold;color:#3a87c8">Details</div></div>
<svg class="s" style="left:687px;top:158px;" width="208" height="150" viewBox="0 0 208 150"><rect x="2.0499999999999545" y="2.8499999999999943" width="203.35000000000002" height="144.50000000000003" rx="3.5" fill="#fff" stroke="#4a4a4a" stroke-width="1.5"/><path d="M2.0499999999999545 26.5 H205.39999999999998 M2.0499999999999545 49.5 H205.39999999999998" stroke="#1e1e1e" stroke-width="1.3"/></svg>
<svg class="s" style="left:695px;top:165px;" width="14" height="16" viewBox="0 0 14 16"><path d="M0.8 0.8 H10 L13.2 4 V15.2 H0.8 Z" fill="#fff" stroke="#7cc0f0" stroke-width="1.2" stroke-linejoin="round"/><path d="M10 0.8 L13.2 4 H10 Z" fill="#3a93dc" stroke="#3a93dc" stroke-width="0.6"/><path d="M4.9 6.8 A2 2 0 1 1 8.9 7 Q8.8 9.8 5.1 10.8 Q6.4 9.6 6.3 8.6 A2 2 0 0 1 4.9 6.8 Z" fill="#3a8fd6"/></svg>
<div class="t" style="left:715.50px;top:167.94px;font-size:11.88px;line-height:11.88px;color:#111;font-weight:normal;">EmployeeDepartmentHistory.csv</div>
<div class="t" style="left:699.60px;top:215.74px;font-size:11.88px;line-height:11.88px;color:#111;font-weight:normal;">BusinessEntityID</div>
<div class="t" style="left:797.5px;top:216.2px;font-size:10px;line-height:10px;font-weight:bold;color:#111;transform:scaleX(0.97);transform-origin:0 0;letter-spacing:-0.2px">12</div>
<div class="t" style="left:699.60px;top:230.49px;font-size:11.88px;line-height:11.88px;color:#111;font-weight:normal;">DepartmentID</div>
<div class="t" style="left:797.5px;top:231.0px;font-size:10px;line-height:10px;font-weight:bold;color:#111;transform:scaleX(0.97);transform-origin:0 0;letter-spacing:-0.2px">12</div>
<div class="t" style="left:699.60px;top:245.24px;font-size:11.88px;line-height:11.88px;color:#111;font-weight:normal;">EndDate</div>
<div class="t" style="left:797.5px;top:245.7px;font-size:10px;line-height:10px;font-weight:bold;color:#111;transform:scaleX(0.86);transform-origin:0 0;letter-spacing:-0.2px">AB</div>
<div class="t" style="left:699.60px;top:259.99px;font-size:11.88px;line-height:11.88px;color:#111;font-weight:normal;">ModifiedDate</div>
<svg class="s" style="left:797.8px;top:259.3px;" width="10" height="10" viewBox="0 0 10 10"><circle cx="5" cy="5" r="3.85" fill="none" stroke="#111" stroke-width="1.15"/><path d="M5 2.6 V5.2 H6.9" fill="none" stroke="#222" stroke-width="1"/></svg>
<div class="t" style="left:699.60px;top:274.74px;font-size:11.88px;line-height:11.88px;color:#111;font-weight:normal;">ShiftID</div>
<div class="t" style="left:797.5px;top:275.2px;font-size:10px;line-height:10px;font-weight:bold;color:#111;transform:scaleX(0.97);transform-origin:0 0;letter-spacing:-0.2px">12</div>
<div class="t" style="left:699.60px;top:289.49px;font-size:11.88px;line-height:11.88px;color:#111;font-weight:normal;">StartDate</div>
<svg class="s" style="left:797.8px;top:288.8px;" width="10" height="10" viewBox="0 0 10 10"><circle cx="5" cy="5" r="3.85" fill="none" stroke="#111" stroke-width="1.15"/><path d="M5 2.6 V5.2 H6.9" fill="none" stroke="#222" stroke-width="1"/></svg>
<svg class="s" style="left:918px;top:176px;" width="144" height="313" viewBox="0 0 144 313"><rect x="2.1000000000000227" y="2.5" width="139.05000000000007" height="308.4" rx="3.5" fill="#fff" stroke="#4a4a4a" stroke-width="1.5"/><path d="M2.1000000000000227 26 H141.1500000000001 M2.1000000000000227 48.5 H141.1500000000001" stroke="#1e1e1e" stroke-width="1.3"/></svg>
<svg class="s" style="left:926px;top:182px;" width="14" height="16" viewBox="0 0 14 16"><path d="M0.8 0.8 H10 L13.2 4 V15.2 H0.8 Z" fill="#fff" stroke="#7cc0f0" stroke-width="1.2" stroke-linejoin="round"/><path d="M10 0.8 L13.2 4 H10 Z" fill="#3a93dc" stroke="#3a93dc" stroke-width="0.6"/><path d="M4.9 6.8 A2 2 0 1 1 8.9 7 Q8.8 9.8 5.1 10.8 Q6.4 9.6 6.3 8.6 A2 2 0 0 1 4.9 6.8 Z" fill="#3a8fd6"/></svg>
<div class="t" style="left:946.40px;top:184.84px;font-size:11.88px;line-height:11.88px;color:#111;font-weight:normal;">Employee.csv</div>
<div class="t" style="left:930.90px;top:232.24px;font-size:11.88px;line-height:11.88px;color:#111;font-weight:normal;">BirthDate</div>
<svg class="s" style="left:1036.3px;top:231.55px;" width="10" height="10" viewBox="0 0 10 10"><circle cx="5" cy="5" r="3.85" fill="none" stroke="#111" stroke-width="1.15"/><path d="M5 2.6 V5.2 H6.9" fill="none" stroke="#222" stroke-width="1"/></svg>
<div class="t" style="left:930.90px;top:247.18px;font-size:11.88px;line-height:11.88px;color:#111;font-weight:normal;">BusinessEntityID</div>
<div class="t" style="left:1036.0px;top:247.6px;font-size:10px;line-height:10px;font-weight:bold;color:#111;transform:scaleX(0.97);transform-origin:0 0;letter-spacing:-0.2px">12</div>
<div class="t" style="left:930.90px;top:262.12px;font-size:11.88px;line-height:11.88px;color:#111;font-weight:normal;">CurrentFlag</div>
<div class="t" style="left:1036.0px;top:262.6px;font-size:10px;line-height:10px;font-weight:bold;color:#111;transform:scaleX(0.97);transform-origin:0 0;letter-spacing:-0.2px">12</div>
<div class="t" style="left:930.90px;top:277.06px;font-size:11.88px;line-height:11.88px;color:#111;font-weight:normal;">Gender</div>
<div class="t" style="left:1036.0px;top:277.5px;font-size:10px;line-height:10px;font-weight:bold;color:#111;transform:scaleX(0.86);transform-origin:0 0;letter-spacing:-0.2px">AB</div>
<div class="t" style="left:930.90px;top:292.00px;font-size:11.88px;line-height:11.88px;color:#111;font-weight:normal;">HireDate</div>
<svg class="s" style="left:1036.3px;top:291.31px;" width="10" height="10" viewBox="0 0 10 10"><circle cx="5" cy="5" r="3.85" fill="none" stroke="#111" stroke-width="1.15"/><path d="M5 2.6 V5.2 H6.9" fill="none" stroke="#222" stroke-width="1"/></svg>
<div class="t" style="left:930.90px;top:306.94px;font-size:11.88px;line-height:11.88px;color:#111;font-weight:normal;">JobTitle</div>
<div class="t" style="left:1036.0px;top:307.4px;font-size:10px;line-height:10px;font-weight:bold;color:#111;transform:scaleX(0.86);transform-origin:0 0;letter-spacing:-0.2px">AB</div>
<div class="t" style="left:930.90px;top:321.88px;font-size:11.88px;line-height:11.88px;color:#111;font-weight:normal;">LoginID</div>
<div class="t" style="left:1036.0px;top:322.3px;font-size:10px;line-height:10px;font-weight:bold;color:#111;transform:scaleX(0.86);transform-origin:0 0;letter-spacing:-0.2px">AB</div>
<div class="t" style="left:930.90px;top:336.82px;font-size:11.88px;line-height:11.88px;color:#111;font-weight:normal;">MaritalStatus</div>
<div class="t" style="left:1036.0px;top:337.3px;font-size:10px;line-height:10px;font-weight:bold;color:#111;transform:scaleX(0.86);transform-origin:0 0;letter-spacing:-0.2px">AB</div>
<div class="t" style="left:930.90px;top:351.76px;font-size:11.88px;line-height:11.88px;color:#111;font-weight:normal;">ModifiedDate</div>
<div class="t" style="left:1036.0px;top:352.2px;font-size:10px;line-height:10px;font-weight:bold;color:#111;transform:scaleX(0.86);transform-origin:0 0;letter-spacing:-0.2px">AB</div>
<div class="t" style="left:930.90px;top:366.70px;font-size:11.88px;line-height:11.88px;color:#111;font-weight:normal;">NationalIDNumber</div>
<div class="t" style="left:1036.0px;top:367.2px;font-size:10px;line-height:10px;font-weight:bold;color:#111;transform:scaleX(0.97);transform-origin:0 0;letter-spacing:-0.2px">12</div>
<div class="t" style="left:930.90px;top:381.64px;font-size:11.88px;line-height:11.88px;color:#111;font-weight:normal;">OrganizationLevel</div>
<div class="t" style="left:1036.0px;top:382.1px;font-size:10px;line-height:10px;font-weight:bold;color:#111;transform:scaleX(0.97);transform-origin:0 0;letter-spacing:-0.2px">12</div>
<div class="t" style="left:930.90px;top:396.58px;font-size:11.88px;line-height:11.88px;color:#111;font-weight:normal;">OrganizationNode</div>
<div class="t" style="left:1036.0px;top:397.0px;font-size:10px;line-height:10px;font-weight:bold;color:#111;transform:scaleX(0.86);transform-origin:0 0;letter-spacing:-0.2px">AB</div>
<div class="t" style="left:930.90px;top:411.52px;font-size:11.88px;line-height:11.88px;color:#111;font-weight:normal;">SSN</div>
<div class="t" style="left:1036.0px;top:412.0px;font-size:10px;line-height:10px;font-weight:bold;color:#111;transform:scaleX(0.86);transform-origin:0 0;letter-spacing:-0.2px">AB</div>
<div class="t" style="left:930.90px;top:426.46px;font-size:11.88px;line-height:11.88px;color:#111;font-weight:normal;">SalariedFlag</div>
<div class="t" style="left:1036.0px;top:426.9px;font-size:10px;line-height:10px;font-weight:bold;color:#111;transform:scaleX(0.97);transform-origin:0 0;letter-spacing:-0.2px">12</div>
<div class="t" style="left:930.90px;top:441.40px;font-size:11.88px;line-height:11.88px;color:#111;font-weight:normal;">SickLeaveHours</div>
<div class="t" style="left:1036.0px;top:441.9px;font-size:10px;line-height:10px;font-weight:bold;color:#111;transform:scaleX(0.97);transform-origin:0 0;letter-spacing:-0.2px">12</div>
<div class="t" style="left:930.90px;top:456.34px;font-size:11.88px;line-height:11.88px;color:#111;font-weight:normal;">VacationHours</div>
<div class="t" style="left:1036.0px;top:456.8px;font-size:10px;line-height:10px;font-weight:bold;color:#111;transform:scaleX(0.97);transform-origin:0 0;letter-spacing:-0.2px">12</div>
<div class="t" style="left:930.90px;top:471.28px;font-size:11.88px;line-height:11.88px;color:#111;font-weight:normal;">rowguid</div>
<div class="t" style="left:1036.0px;top:471.7px;font-size:10px;line-height:10px;font-weight:bold;color:#111;transform:scaleX(0.86);transform-origin:0 0;letter-spacing:-0.2px">AB</div>
<svg class="s" style="left:499px;top:620px;" width="136" height="120" viewBox="0 0 136 120"><rect x="2.8999999999999773" y="2.7999999999999545" width="131.0" height="114.60000000000002" rx="3.5" fill="#fff" stroke="#4a4a4a" stroke-width="1.5"/><path d="M2.8999999999999773 26.5 H133.89999999999998 M2.8999999999999773 49.5 H133.89999999999998" stroke="#1e1e1e" stroke-width="1.3"/></svg>
<svg class="s" style="left:508px;top:627px;" width="14" height="16" viewBox="0 0 14 16"><path d="M0.8 0.8 H10 L13.2 4 V15.2 H0.8 Z" fill="#fff" stroke="#7cc0f0" stroke-width="1.2" stroke-linejoin="round"/><path d="M10 0.8 L13.2 4 H10 Z" fill="#3a93dc" stroke="#3a93dc" stroke-width="0.6"/><path d="M4.9 6.8 A2 2 0 1 1 8.9 7 Q8.8 9.8 5.1 10.8 Q6.4 9.6 6.3 8.6 A2 2 0 0 1 4.9 6.8 Z" fill="#3a8fd6"/></svg>
<div class="t" style="left:527.90px;top:629.54px;font-size:11.88px;line-height:11.88px;color:#111;font-weight:normal;">JobCandidate.csv</div>
<div class="t" style="left:512.50px;top:677.24px;font-size:11.88px;line-height:11.88px;color:#111;font-weight:normal;">BusinessEntityID</div>
<div class="t" style="left:610.0px;top:677.7px;font-size:10px;line-height:10px;font-weight:bold;color:#111;transform:scaleX(0.86);transform-origin:0 0;letter-spacing:-0.2px">AB</div>
<div class="t" style="left:512.50px;top:692.09px;font-size:11.88px;line-height:11.88px;color:#111;font-weight:normal;">JobCandidateID</div>
<div class="t" style="left:610.0px;top:692.5px;font-size:10px;line-height:10px;font-weight:bold;color:#111;transform:scaleX(0.97);transform-origin:0 0;letter-spacing:-0.2px">12</div>
<div class="t" style="left:512.50px;top:706.94px;font-size:11.88px;line-height:11.88px;color:#111;font-weight:normal;">ModifiedDate</div>
<svg class="s" style="left:610.3px;top:706.25px;" width="10" height="10" viewBox="0 0 10 10"><circle cx="5" cy="5" r="3.85" fill="none" stroke="#111" stroke-width="1.15"/><path d="M5 2.6 V5.2 H6.9" fill="none" stroke="#222" stroke-width="1"/></svg>
<div class="t" style="left:512.50px;top:721.79px;font-size:11.88px;line-height:11.88px;color:#111;font-weight:normal;">Resume</div>
<div class="t" style="left:610.0px;top:722.2px;font-size:10px;line-height:10px;font-weight:bold;color:#111;transform:scaleX(0.86);transform-origin:0 0;letter-spacing:-0.2px">AB</div>
<svg class="s" style="left:789px;top:306px;" width="4" height="136" viewBox="0 0 4 136"><path d="M2 0 V136" stroke="#8c8c8c" stroke-width="1.6"/></svg>
<svg class="s" style="left:785px;top:431px;" width="12" height="11" viewBox="0 0 12 11"><path d="M6 0.5 L11.2 10.5 H0.8 Z" fill="#666"/></svg>
<div class="t" style="left:501.50px;top:360.84px;font-size:11.88px;line-height:11.88px;color:#111;font-weight:normal;">Department.csv to EmployeeDepartmentHistory.csv</div>
<svg class="s" style="left:731px;top:446px;" width="120" height="120" viewBox="0 0 120 120"><rect x="2.5" y="2.5" width="115.0" height="115.0" rx="4" fill="#f6f9fc" stroke="#3469d4" stroke-width="3"/><path d="M4.0 26.5 H116.0 M4.0 49.5 H116.0" stroke="#333" stroke-width="1.3"/></svg>
<svg class="s" style="left:739px;top:453px;" width="14" height="16" viewBox="0 0 14 16"><path d="M0.8 0.8 H10 L13.2 4 V15.2 H0.8 Z" fill="#fff" stroke="#7cc0f0" stroke-width="1.2" stroke-linejoin="round"/><path d="M10 0.8 L13.2 4 H10 Z" fill="#3a93dc" stroke="#3a93dc" stroke-width="0.6"/><path d="M4.9 6.8 A2 2 0 1 1 8.9 7 Q8.8 9.8 5.1 10.8 Q6.4 9.6 6.3 8.6 A2 2 0 0 1 4.9 6.8 Z" fill="#3a8fd6"/></svg>
<div class="t" style="left:759.80px;top:455.74px;font-size:11.88px;line-height:11.88px;color:#111;font-weight:normal;">Department.csv</div>
<div class="t" style="left:743.80px;top:504.14px;font-size:11.88px;line-height:11.88px;color:#111;font-weight:normal;">DepartmentID</div>
<div class="t" style="left:825.2px;top:504.6px;font-size:10px;line-height:10px;font-weight:bold;color:#111;transform:scaleX(0.97);transform-origin:0 0;letter-spacing:-0.2px">12</div>
<div class="t" style="left:743.80px;top:519.07px;font-size:11.88px;line-height:11.88px;color:#111;font-weight:normal;">GroupName</div>
<div class="t" style="left:825.2px;top:519.5px;font-size:10px;line-height:10px;font-weight:bold;color:#111;transform:scaleX(0.86);transform-origin:0 0;letter-spacing:-0.2px">AB</div>
<div class="t" style="left:743.80px;top:534.00px;font-size:11.88px;line-height:11.88px;color:#111;font-weight:normal;">ModifiedDate</div>
<svg class="s" style="left:825.5px;top:533.3100000000001px;" width="10" height="10" viewBox="0 0 10 10"><circle cx="5" cy="5" r="3.85" fill="none" stroke="#111" stroke-width="1.15"/><path d="M5 2.6 V5.2 H6.9" fill="none" stroke="#222" stroke-width="1"/></svg>
<div class="t" style="left:743.80px;top:548.93px;font-size:11.88px;line-height:11.88px;color:#111;font-weight:normal;">Name</div>
<div class="t" style="left:825.2px;top:549.4px;font-size:10px;line-height:10px;font-weight:bold;color:#111;transform:scaleX(0.86);transform-origin:0 0;letter-spacing:-0.2px">AB</div>
<svg class="s" style="left:725px;top:440px;" width="10" height="10" viewBox="0 0 10 10"><circle cx="5" cy="5" r="4" fill="#2f6ad3" stroke="#fff" stroke-width="1"/></svg>
<svg class="s" style="left:786px;top:440px;" width="10" height="10" viewBox="0 0 10 10"><circle cx="5" cy="5" r="4" fill="#2f6ad3" stroke="#fff" stroke-width="1"/></svg>
<svg class="s" style="left:847px;top:440px;" width="10" height="10" viewBox="0 0 10 10"><circle cx="5" cy="5" r="4" fill="#2f6ad3" stroke="#fff" stroke-width="1"/></svg>
<svg class="s" style="left:725px;top:501.5px;" width="10" height="10" viewBox="0 0 10 10"><circle cx="5" cy="5" r="4" fill="#2f6ad3" stroke="#fff" stroke-width="1"/></svg>
<svg class="s" style="left:847px;top:501.5px;" width="10" height="10" viewBox="0 0 10 10"><circle cx="5" cy="5" r="4" fill="#2f6ad3" stroke="#fff" stroke-width="1"/></svg>
<svg class="s" style="left:725px;top:562.5px;" width="10" height="10" viewBox="0 0 10 10"><circle cx="5" cy="5" r="4" fill="#2f6ad3" stroke="#fff" stroke-width="1"/></svg>
<svg class="s" style="left:786px;top:562.5px;" width="10" height="10" viewBox="0 0 10 10"><circle cx="5" cy="5" r="4" fill="#2f6ad3" stroke="#fff" stroke-width="1"/></svg>
<svg class="s" style="left:847px;top:562.5px;" width="10" height="10" viewBox="0 0 10 10"><circle cx="5" cy="5" r="4" fill="#2f6ad3" stroke="#fff" stroke-width="1"/></svg>
<div class="b" style="left:855px;top:449px;width:24px;height:24px;background:#f3f3f3;border:1px solid #dedede;border-radius:3px"></div>
<svg class="s" style="left:859px;top:452px;" width="17" height="16" viewBox="0 0 17 16"><path d="M2.5 11.9 H8.1 V3.9 H13" fill="none" stroke="#3a87c8" stroke-width="2"/><path d="M12.3 0.9 L15.9 3.9 L12.3 6.9 Z" fill="#3a87c8"/><path d="M3.7 9 L0.1 11.9 L3.7 14.9 Z" fill="#3a87c8"/></svg>
<div class="b" style="left:1266px;top:0px;width:1px;height:754px;background:#ababab"></div>
<div class="b" style="left:0px;top:0px;width:1px;height:754px;background:#9d9d9d"></div>
<div class="b" style="left:0px;top:753px;width:1267px;height:1px;background:#243548"></div>
<svg class="s" style="left:0px;top:743px;" width="11" height="11" viewBox="0 0 11 11"><path d="M0 0 V11 H11 V10 A10 10 0 0 1 1 0 Z" fill="#243548"/><path d="M0.5 0 A10.5 10.5 0 0 0 11 10.5" fill="none" stroke="#6a737e" stroke-width="0.8"/></svg>
<svg class="s" style="left:1256px;top:743px;" width="11" height="11" viewBox="0 0 11 11"><path d="M11 0 V11 H0 V10 A10 10 0 0 0 10 0 Z" fill="#243548"/><path d="M10.5 0 A10.5 10.5 0 0 1 0 10.5" fill="none" stroke="#6a737e" stroke-width="0.8"/></svg>
</body></html>
